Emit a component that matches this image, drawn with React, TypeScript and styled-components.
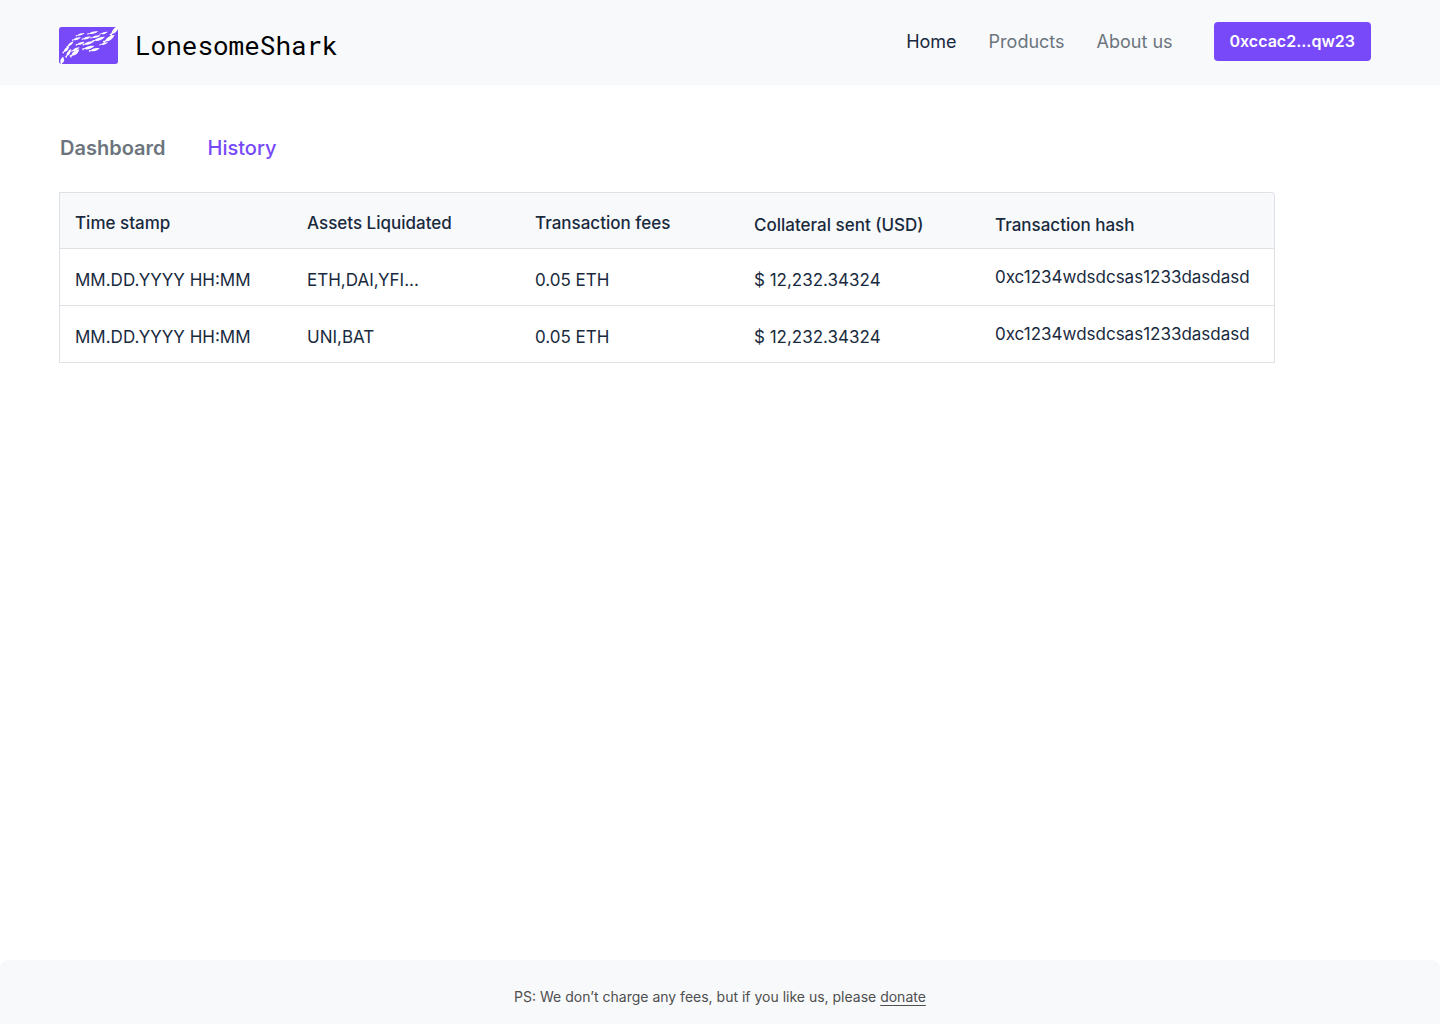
import React from "react";
import styled, { createGlobalStyle } from "styled-components";

const color = {
  ink: "#192a3e",
  muted: "#6c757d",
  accent: "#7749f8",
  surface: "#f8f9fb",
  line: "#dee2e6",
  footer: "#4f4f4f",
};

const GlobalStyle = createGlobalStyle`
  *, *::before, *::after { box-sizing: border-box; }
  body {
    margin: 0;
    background: #fff;
    color: ${color.ink};
    font-family: Inter, "Liberation Sans", sans-serif;
  }
`;

const Page = styled.div`
  display: flex;
  flex-direction: column;
  min-height: 100vh;
`;

const Header = styled.header`
  display: flex;
  align-items: flex-start;
  justify-content: space-between;
  padding: 22px 69px 21px 59px;
  background: ${color.surface};
`;

const Brand = styled.a`
  display: flex;
  align-items: center;
  gap: 17px;
  padding-top: 5px;
  color: #000;
  text-decoration: none;
`;

const BrandName = styled.span`
  font-family: "Roboto Mono", "DejaVu Sans Mono", monospace;
  font-size: 26px;
  line-height: 37px;
`;

const Nav = styled.nav`
  display: flex;
  align-items: center;
`;

const NavLinks = styled.div`
  display: flex;
  gap: 32px;
  margin-right: 41px;
`;

const NavLink = styled.a<{ $active?: boolean }>`
  color: ${(p) => (p.$active ? color.ink : color.muted)};
  font-size: 18px;
  line-height: 24px;
  text-decoration: none;
`;

const WalletButton = styled.button`
  height: 39px;
  padding: 0 16px 2px;
  border: 0;
  border-radius: 4px;
  background: ${color.accent};
  color: #fff;
  font-family: inherit;
  font-size: 16px;
  font-weight: 600;
  line-height: 24px;
  cursor: pointer;
`;

const Main = styled.main`
  flex: 1;
  padding: 51px 59px;
`;

const Tabs = styled.nav`
  display: flex;
  gap: 42px;
  margin-bottom: 32px;
  padding-left: 1px;
`;

const Tab = styled.a<{ $active?: boolean }>`
  color: ${(p) => (p.$active ? color.accent : color.muted)};
  font-size: 20px;
  font-weight: ${(p) => (p.$active ? 500 : 600)};
  line-height: 24px;
  text-decoration: none;
`;

const Table = styled.table`
  width: 100%;
  max-width: 1216px;
  table-layout: fixed;
  border-collapse: separate;
  border-spacing: 0;
  border: 1px solid ${color.line};
  border-bottom: 0;
  border-top-right-radius: 4px;
  font-size: 17px;
  line-height: 24px;
  text-align: left;
`;

const Column = styled.col<{ $width?: number }>`
  width: ${(p) => (p.$width ? `${p.$width}px` : "auto")};
`;

const HeadCell = styled.th<{ $low?: boolean }>`
  height: 56px;
  padding: ${(p) => (p.$low ? "20px 0 11px 15px" : "18px 0 13px 15px")};
  border-bottom: 1px solid ${color.line};
  background: ${color.surface};
  font-weight: 500;
  white-space: nowrap;

  &:last-child {
    border-top-right-radius: 4px;
  }
`;

const Cell = styled.td<{ $high?: boolean }>`
  height: 57px;
  padding: ${(p) => (p.$high ? "16px 0 16px 15px" : "19px 0 13px 15px")};
  border-bottom: 1px solid ${color.line};
  white-space: nowrap;
`;

const Footer = styled.footer`
  padding: 25px 24px 15px;
  border-radius: 8px 8px 0 0;
  background: ${color.surface};
  color: ${color.footer};
  font-size: 14px;
  line-height: 24px;
  text-align: center;
`;

const DonateLink = styled.a`
  color: inherit;
  text-decoration: underline;
  text-underline-offset: 3px;
`;

// Each fish runs from its tail to its nose: x1, y1, x2, y2, body half-width.
const fish: [number, number, number, number, number][] = [
  [50, 27, 77, 18, 4],
  [85, 21, 118, 13, 5],
  [121, 22, 147, 14, 4],
  [39, 40, 66, 31, 5],
  [68, 37, 95, 29, 5],
  [94, 33, 125, 25, 5],
  [133, 46, 167, 23, 8],
  [154, 25, 179, -4, 8],
  [71, 53, 105, 43, 6],
  [100, 43, 138, 29, 6],
  [70, 67, 106, 57, 6],
  [90, 72, 122, 64, 6],
  [121, 54, 148, 46, 4],
  [23, 60, 44, 43, 5],
  [11, 78, 31, 57, 6],
  [20, 91, 36, 65, 6],
  [33, 89, 61, 67, 8],
  [37, 73, 62, 61, 5],
  [50, 54, 77, 44, 5],
  [6, 114, 12, 89, 8],
];

function fishPath([x1, y1, x2, y2, w]: [number, number, number, number, number]) {
  const dx = x2 - x1;
  const dy = y2 - y1;
  const length = Math.hypot(dx, dy);
  const nx = (-dy / length) * w;
  const ny = (dx / length) * w;
  const at = (t: number, side: number) =>
    `${x1 + dx * t + nx * side} ${y1 + dy * t + ny * side}`;
  return `M${at(0, 0.6)} L${at(0.18, 0.2)} C${at(0.4, 1)} ${at(0.7, 1)} ${at(1, 0)} C${at(0.7, -0.8)} ${at(0.4, -0.8)} ${at(0.18, -0.2)} L${at(0.02, -0.5)} Z`;
}

function Logo() {
  return (
    <svg width="59" height="37" viewBox="0 0 177 111" aria-hidden="true">
      <rect width="177" height="111" rx="8" fill={color.accent} />
      {fish.map((f) => (
        <path key={f.join()} d={fishPath(f)} fill="#fff" />
      ))}
    </svg>
  );
}

const columns = [
  { title: "Time stamp", width: 232 },
  { title: "Assets Liquidated", width: 228 },
  { title: "Transaction fees", width: 219 },
  { title: "Collateral sent (USD)", width: 241, low: true },
  { title: "Transaction hash", low: true },
];

const rows = [
  ["MM.DD.YYYY HH:MM", "ETH,DAI,YFI...", "0.05 ETH", "$ 12,232.34324", "0xc1234wdsdcsas1233dasdasd"],
  ["MM.DD.YYYY HH:MM", "UNI,BAT", "0.05 ETH", "$ 12,232.34324", "0xc1234wdsdcsas1233dasdasd"],
];

export default function App() {
  return (
    <Page>
      <GlobalStyle />
      <Header>
        <Brand href="#">
          <Logo />
          <BrandName>LonesomeShark</BrandName>
        </Brand>
        <Nav>
          <NavLinks>
            <NavLink href="#" $active>Home</NavLink>
            <NavLink href="#products">Products</NavLink>
            <NavLink href="#about">About us</NavLink>
          </NavLinks>
          <WalletButton type="button">0xccac2...qw23</WalletButton>
        </Nav>
      </Header>
      <Main>
        <Tabs>
          <Tab href="#dashboard">Dashboard</Tab>
          <Tab href="#history" $active>History</Tab>
        </Tabs>
        <Table>
          <colgroup>
            {columns.map((c) => (
              <Column key={c.title} $width={c.width} />
            ))}
          </colgroup>
          <thead>
            <tr>
              {columns.map((c) => (
                <HeadCell key={c.title} scope="col" $low={c.low}>{c.title}</HeadCell>
              ))}
            </tr>
          </thead>
          <tbody>
            {rows.map((row, r) => (
              <tr key={r}>
                {row.map((value, i) => (
                  <Cell key={i} $high={i === row.length - 1}>{value}</Cell>
                ))}
              </tr>
            ))}
          </tbody>
        </Table>
      </Main>
      <Footer>
        PS: We don’t charge any fees, but if you like us, please <DonateLink href="#donate">donate</DonateLink>
      </Footer>
    </Page>
  );
}
